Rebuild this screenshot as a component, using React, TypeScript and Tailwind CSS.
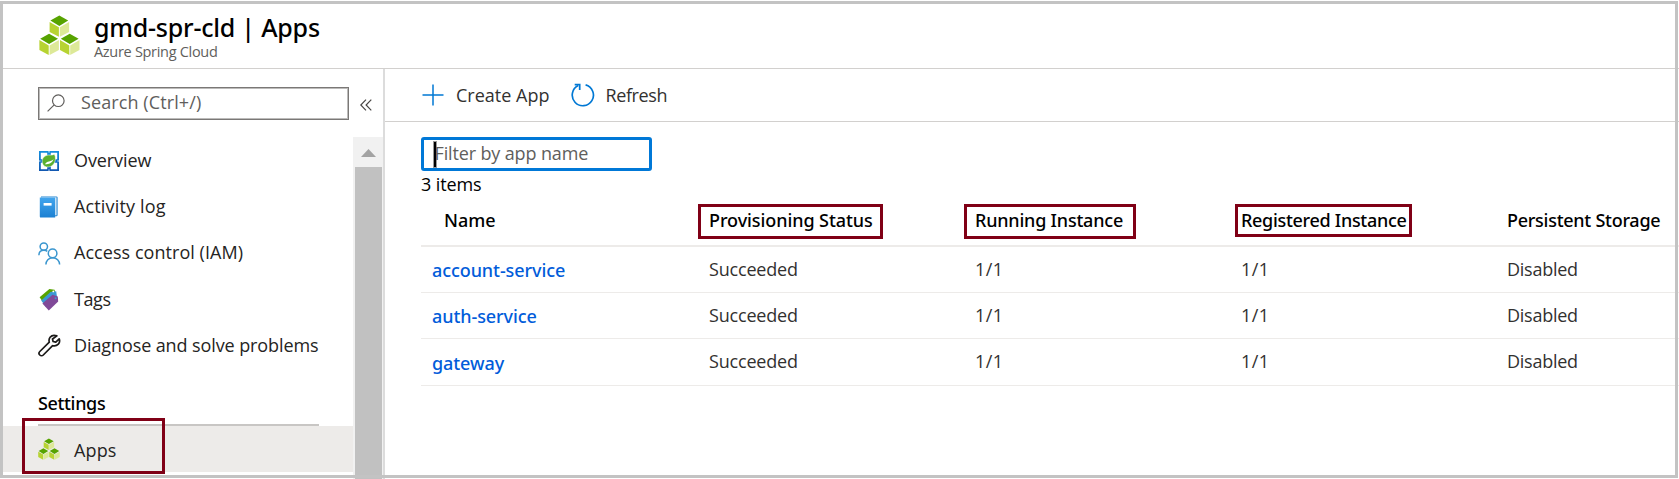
import type { ReactNode } from "react";

const headings = "font-['Noto_Sans','Open_Sans',sans-serif] font-medium text-black";

function CubesIcon({ className }: { className: string }) {
  const cubes = [
    [0, 0],
    [-10.2, 18.2],
    [10.4, 18.2],
  ];
  return (
    <svg viewBox="0 0 41 40" className={className}>
      {cubes.map(([x, y]) => (
        <g key={x} transform={`translate(${x} ${y})`}>
          <path d="M20.3.5 29.2 5.600 20.300 10.900 11.400 5.600z" fill="#57a300" />
          <path d="M10.600 6.900 19.900 12.200V21.800L10.600 16.900z" fill="#b7d332" />
          <path d="M30.100 6.900 20.800 12.200V21.800L30.100 16.900z" fill="#dde998" />
        </g>
      ))}
    </svg>
  );
}

function OverviewIcon() {
  return (
    <svg viewBox="0 0 22 22" className="size-[22px]">
      <defs>
        <linearGradient id="grid" x2="0" y2="1">
          <stop stopColor="#1490df" />
          <stop offset="1" stopColor="#1257b0" />
        </linearGradient>
      </defs>
      <path d="M1 1h20v20H1z" fill="url(#grid)" />
      <path d="M2.800 2.800h6.400v6.400H2.800zM12.800 2.800h6.400v6.400h-6.400zM2.800 12.800h6.400v6.400H2.800zM12.800 12.800h6.400v6.400h-6.400z" fill="#fff" />
      <path d="M11 1v1.600M11 19.400V21M1 11h1.600M19.400 11H21" stroke="#fff" strokeWidth=".8" />
      <path d="M16.400 4.200c1.600 3 1.200 6.600-.1 8.900-1.500 3-4.800 4.400-7.900 3.800C5.500 16.300 4 13.800 4.200 10.700 4.500 7.600 7.200 5.200 10.400 5c2.600.3 4.600 0 6-.8z" fill="#5bb02e" stroke="#fff" strokeWidth=".5" />
      <path d="M7 14.200c3.600.1 7-1 8.600-5-2.400 2-4.200 1.900-5.800 2.500-1.300.5-2.200 1.200-2.800 2.500z" fill="#fff" />
    </svg>
  );
}

function LogIcon() {
  return (
    <svg viewBox="0 0 22 22" className="size-[22px]">
      <defs>
        <linearGradient id="book" x2="0" y2="1">
          <stop stopColor="#41a5ee" />
          <stop offset="1" stopColor="#1c80d2" />
        </linearGradient>
      </defs>
      <path d="M3 .4h15.400a1.200 1.200 0 0 1 1.200 1.200V19a1.200 1.200 0 0 1-1.200 1.200H3z" fill="#2585d0" />
      <path d="M3.200 1.300h15.300v18H3.200z" fill="#e8f3fc" />
      <path d="M1.800 1.600h15.400v20H3a1.200 1.200 0 0 1-1.200-1.200z" fill="url(#book)" />
      <path d="M5.600 7h8v2.600h-8z" fill="#fff" />
    </svg>
  );
}

function PeopleIcon() {
  return (
    <svg viewBox="0 0 23 23" className="h-[23px] w-[23px]" fill="none" stroke="#3a96cf" strokeWidth="1.500">
      <circle cx="5.800" cy="4.600" r="3.700" />
      <path d="M.9 13.200C.9 10.200 3 8.300 5.900 8.300c1.500 0 2.600.4 3.400 1.100" />
      <circle cx="14.600" cy="11.400" r="4.300" />
      <path d="M7.900 22.600c0-3.900 2.800-6.900 6.800-6.900s6.900 3 6.900 6.900" />
    </svg>
  );
}

function TagsIcon() {
  return (
    <svg viewBox="0 0 22 23" className="h-[23px] w-[22px]">
      <path d="M1.600 9.200 11.400.9 16.600 1.800 17.400 6 7 17z" fill="#57a300" />
      <path d="M3.200 12.600 12.500 4 18.200 3.300 19 9 8 19z" fill="#3b99d4" />
      <path d="M4.400 15.600 14.500 6.700 19.800 8.600 20.200 13.600 10.800 22.400z" fill="#804998" />
      <circle cx="15.300" cy="3.400" r=".9" fill="#fff" />
      <circle cx="17.600" cy="10.200" r="1" fill="#3b99d4" />
    </svg>
  );
}

function WrenchIcon() {
  return (
    <svg viewBox="0 0 23 23" className="size-[23px]" fill="none" stroke="#1b1a19" strokeWidth="1.700" strokeLinejoin="round">
      <path d="M18.900 1.900c-2.600-1-5.300-.5-6.800 1.400-1.100 1.400-1.300 3.200-.8 4.900L1.800 17.500c-1 1-1 2.500 0 3.500s2.500 1 3.500 0l9.300-9.300c2.200.6 4.300 0 5.700-1.500 1.300-1.500 1.600-3.600.9-5.400l-3.400 3.300-2.700-.6-.6-2.500z" />
    </svg>
  );
}

const nav: { label: string; icon: ReactNode; tracking: string }[] = [
  { label: "Overview", icon: <OverviewIcon />, tracking: "pb-[2px] tracking-[-0.1px]" },
  { label: "Activity log", icon: <LogIcon />, tracking: "pb-[2px] tracking-[0.15px]" },
  { label: "Access control (IAM)", icon: <PeopleIcon />, tracking: "pb-[2px] tracking-[0.05px]" },
  { label: "Tags", icon: <TagsIcon />, tracking: "tracking-[-0.4px]" },
  { label: "Diagnose and solve problems", icon: <WrenchIcon />, tracking: "tracking-[-0.1px]" },
];

const columns = [
  { label: "Provisioning Status", tracking: "tracking-[-0.08px]", box: "-left-[11px] w-[185px] h-[35px]" },
  { label: "Running Instance", tracking: "tracking-[-0.2px]", box: "-left-[11px] w-[172px] h-[35px]" },
  { label: "Registered Instance", tracking: "tracking-[-0.3px]", box: "-left-[6px] w-[177px] h-[33px]" },
  { label: "Persistent Storage", tracking: "tracking-[-0.27px]", box: "" },
];

const apps = [
  { name: "account-service", row: "h-[46px]", link: "pt-px" },
  { name: "auth-service", row: "h-[46px]", link: "pt-px" },
  { name: "gateway", row: "h-[47px]", link: "pt-[2px]" },
];

const tableGrid = "grid grid-cols-[288px_266px_266px_266px_1fr]";

export default function App() {
  return (
    <div className="relative flex h-[479px] w-[1679px] flex-col overflow-hidden bg-white pt-1 pl-[3px] font-['Open_Sans','Noto_Sans',sans-serif] text-[18px] leading-6 text-[#323130]">
      <header className="flex h-[65px] shrink-0 border-b border-[#d2d0ce]">
        <CubesIcon className="mt-[11px] ml-9 h-10 w-[41px]" />
        <div className="ml-[14px] whitespace-nowrap">
          <h1 className={`${headings} mt-[7px] text-[25px] leading-8 tracking-[-0.22px]`}>gmd-spr-cld | Apps</h1>
          <p className="mt-[-1px] text-[14.5px] leading-5 tracking-[-0.3px] text-[#605e5c]">Azure Spring Cloud</p>
        </div>
      </header>

      <div className="flex min-h-0 flex-1">
        <aside className="flex w-[382px] shrink-0 flex-col border-r-2 border-[#dcdcdc]">
          <div className="flex h-[68px] shrink-0 pt-[18px] pl-[35px]">
            <div className="flex h-[33px] w-[311px] items-center border border-[#7a7876] pl-2 text-[#605e5c] outline-1 -outline-offset-2 outline-[#7a7876]/50">
              <svg viewBox="0 0 18 18" className="mb-px size-[18px]" fill="none" stroke="#605e5c" strokeWidth="1.200">
                <circle cx="11.300" cy="6.700" r="5.800" />
                <path d="M7.200 10.800.6 17.400" />
              </svg>
              <span className="ml-[16px] pb-[3px] tracking-[0.1px]">Search (Ctrl+/)</span>
            </div>
            <svg viewBox="0 0 12 12" className="mt-[12px] ml-[11px] size-3" fill="none" stroke="#484644" strokeWidth="1.200">
              <path d="M6 .7.8 6 6 11.300M11.300.7 6.100 6l5.200 5.300" />
            </svg>
          </div>

          <div className="flex min-h-0 flex-1">
            <nav className="w-[350px] pt-px">
              {nav.map((item) => (
                <a key={item.label} className="flex h-[46px] items-center pl-[35px]">
                  <span className="w-[23px]">{item.icon}</span>
                  <span className={`ml-[13px] text-[#252423] ${item.tracking}`}>{item.label}</span>
                </a>
              ))}
              <div className={`${headings} ml-[35px] h-[58px] w-[281px] border-b-2 border-[#c8c6c4] pt-[23px] tracking-[-0.35px]`}>Settings</div>
              <a className="relative flex h-[46px] items-center bg-[#edebe9] pl-[35px]">
                <CubesIcon className="h-[22px] w-[22px]" />
                <span className="ml-[14px] pt-px tracking-[0.15px] text-[#252423]">Apps</span>
                <span className="absolute -top-2 left-[19px] h-[56px] w-[143px] border-3 border-[#800016]" />
              </a>
            </nav>
            <div className="flex w-[30px] flex-col items-center bg-[#f1f1f1]">
              <svg viewBox="0 0 15 8" className="mt-3 h-2 w-[15px]" fill="#a3a3a3">
                <path d="M7.500 0 15 8H0z" />
              </svg>
              <div className="mt-[10px] w-[27px] flex-1 bg-[#c1c1c1]" />
            </div>
          </div>
        </aside>

        <main className="min-w-0 flex-1">
          <div className="flex h-[53px] items-center border-b border-[#d2d0ce] pl-[37px]">
            <svg viewBox="0 0 22 22" className="size-[22px]" stroke="#0078d4" strokeWidth="1.500">
              <path d="M11 .5v21M.5 11h21" />
            </svg>
            <span className="ml-[12px] tracking-[0px]">Create App</span>
            <svg viewBox="0 0 24 24" className="ml-[22px] size-6" fill="none" stroke="#0078d4" strokeWidth="1.700">
              <path d="M14.600 1.900A10.600 10.600 0 1 1 7.200 2.600" />
              <path d="M3.700 1.600h5v5.400" />
            </svg>
            <span className="ml-[10px] tracking-[-0.37px]">Refresh</span>
          </div>

          <div className="pt-[15px] pl-[36px]">
            <div className="flex h-[34px] w-[231px] items-center rounded-[3px] border-3 border-[#0078d7] pl-[10px]">
              <span className="h-[25px] w-[1.5px] bg-black outline-[0.5px] outline-black/40" />
              <span className="ml-[-1px] pb-[2px] tracking-[-0.14px] text-[#605e5c]">Filter by app name</span>
            </div>
            <div className="h-6 pt-px tracking-[-0.1px] text-black">3 items</div>

            <div className={`${tableGrid} ${headings} h-[52px] border-b-2 border-[#edebe9] pt-[13px]`}>
              <div className="pl-[23px]">Name</div>
              {columns.map((column) => (
                <div key={column.label} className={`relative whitespace-nowrap ${column.tracking}`}>
                  {column.label}
                  {column.box && <span className={`absolute -top-[4px] border-3 border-[#800016] ${column.box}`} />}
                </div>
              ))}
            </div>
            {apps.map((app) => (
              <div key={app.name} className={`${tableGrid} items-center border-b border-[#edebe9] ${app.row}`}>
                <a className={`${app.link} pl-[11px] font-['Noto_Sans'] font-medium tracking-[-0.08px] text-[#015cda]`}>{app.name}</a>
                <span className="pb-[2px] tracking-[-0.19px]">Succeeded</span>
                <span className="pb-[2px] tracking-[0.4px]">1/1</span>
                <span className="pb-[2px] tracking-[0.4px]">1/1</span>
                <span className="pb-[2px] tracking-[-0.26px]">Disabled</span>
              </div>
            ))}
          </div>
        </main>
      </div>

      <div className="pointer-events-none absolute top-px left-0 h-[477px] w-[1678px] border-3 border-[#c3c3c3]" />
    </div>
  );
}
